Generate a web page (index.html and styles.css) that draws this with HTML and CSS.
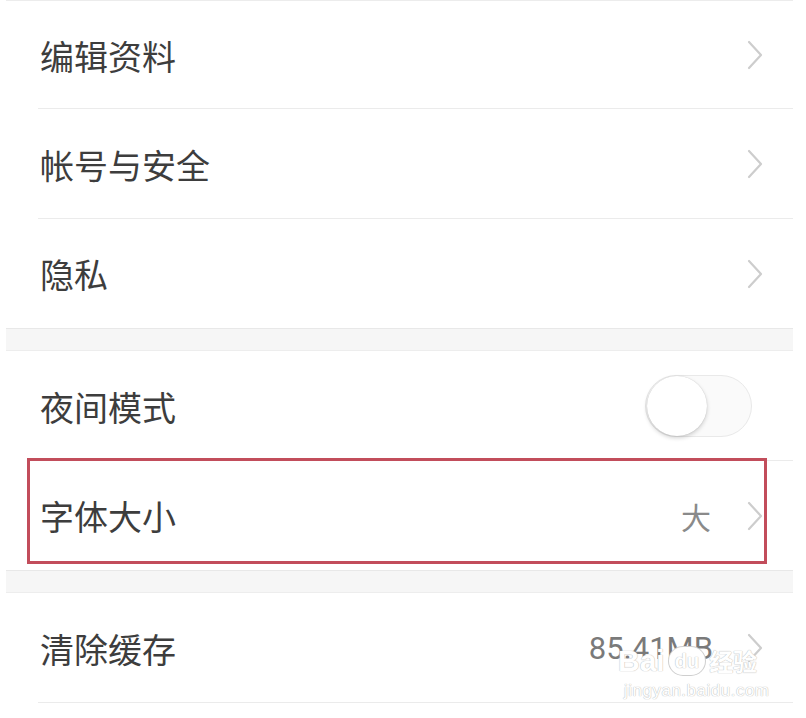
FILE: index.html
```html
<!DOCTYPE html>
<html lang="zh-CN">
<head>
<meta charset="utf-8">
<link rel="stylesheet" href="styles.css">
</head>
<body>
<div class="page">
  <div class="section first">
    <div class="row sep">
      <span class="label">编辑资料</span>
      <svg class="chev" viewBox="0 0 16 30" width="16" height="30"><polyline points="2,2 14,15 2,28"/></svg>
    </div>
    <div class="row sep">
      <span class="label">帐号与安全</span>
      <svg class="chev" viewBox="0 0 16 30" width="16" height="30"><polyline points="2,2 14,15 2,28"/></svg>
    </div>
    <div class="row">
      <span class="label">隐私</span>
      <svg class="chev" viewBox="0 0 16 30" width="16" height="30"><polyline points="2,2 14,15 2,28"/></svg>
    </div>
  </div>
  <div class="gap"></div>
  <div class="section">
    <div class="row sep">
      <span class="label">夜间模式</span>
      <div class="toggle"><div class="knob"></div></div>
    </div>
    <div class="row highlight">
      <span class="label">字体大小</span>
      <span class="value">大</span>
      <svg class="chev" viewBox="0 0 16 30" width="16" height="30"><polyline points="2,2 14,15 2,28"/></svg>
      <div class="mark"></div>
    </div>
  </div>
  <div class="gap"></div>
  <div class="section">
    <div class="row sep">
      <span class="label">清除缓存</span>
      <span class="value num">85.41MB</span>
      <svg class="chev" viewBox="0 0 16 30" width="16" height="30"><polyline points="2,2 14,15 2,28"/></svg>
    </div>
  </div>
  <div class="watermark">
    <div class="wm-top"><span class="wm-bai">Bai</span><span class="wm-du">du</span><span class="wm-jy">经验</span></div>
    <div class="wm-url">jingyan.baidu.com</div>
  </div>
</div>
</body>
</html>
```
FILE: styles.css
```css
html, body {
  margin: 0;
  padding: 0;
  background: #fff;
}
body {
  width: 806px;
  height: 718px;
  overflow: hidden;
  font-family: "Noto Sans CJK SC", "Noto Sans", sans-serif;
}
.page {
  position: relative;
  margin-left: 6px;
  width: 787px;
  border-top: 1px solid #ececec;
}
.section {
  background: #fff;
}
.row {
  position: relative;
  display: flex;
  align-items: center;
  height: 109px;
  padding-left: 34px;
  padding-right: 30px;
  box-sizing: border-box;
}
.row.sep {
  height: 110px;
}
.section.first .row.sep:first-child {
  height: 108px;
}
.row.sep::after {
  content: "";
  position: absolute;
  left: 32px;
  right: 0;
  bottom: 0;
  height: 1px;
  background: #ebebeb;
}
.label {
  flex: 1;
  font-size: 34px;
  color: #3d3d3d;
  margin-top: 0;
}
.value {
  font-size: 30px;
  color: #8a8a8a;
  margin-right: 36px;
}
.value.num {
  font-family: "Roboto", "Noto Sans", sans-serif;
  font-size: 31px;
  color: #7a7a7a;
  margin-right: 34px;
}
.chev {
  display: block;
}
.chev polyline {
  fill: none;
  stroke: #cdcdcd;
  stroke-width: 2.2;
  stroke-linecap: round;
  stroke-linejoin: round;
}
.gap {
  height: 21px;
  background: #f6f6f6;
  border-top: 1px solid #e8e8e8;
  border-bottom: 1px solid #ededed;
}
.toggle {
  position: relative;
  width: 107px;
  height: 62px;
  margin-right: 11px;
  border-radius: 31px;
  background: #fafafa;
  border: 1px solid #e9e9e9;
  box-sizing: border-box;
}
.knob {
  position: absolute;
  left: 1px;
  top: 0;
  width: 60px;
  height: 60px;
  border-radius: 50%;
  background: #fff;
  box-shadow: 0 2px 4px rgba(0,0,0,0.18), 0 0 1px rgba(0,0,0,0.2);
}
.mark {
  position: absolute;
  left: 21px;
  top: -3px;
  width: 740px;
  height: 106px;
  border: 3px solid #c24d5b;
  box-sizing: border-box;
}
.watermark {
  position: absolute;
  left: 612px;
  top: 645px;
  color: #fff;
  text-shadow: 0 0 1px #bdbdbd, 0 0 1px #bdbdbd;
  font-family: "Liberation Sans", sans-serif;
  line-height: 1;
}
.wm-top {
  display: flex;
  align-items: center;
  gap: 4px;
}
.wm-bai {
  font-size: 30px;
  font-weight: bold;
}
.wm-du {
  font-size: 20px;
  font-weight: bold;
  padding: 4px 6px;
  border-radius: 14px;
  background: #fff;
  box-shadow: 0 0 0 1px #cfcfcf;
  color: #fff;
}
.wm-jy {
  font-family: "Noto Sans CJK SC", sans-serif;
  font-size: 24px;
  font-weight: bold;
}
.wm-url {
  font-size: 17px;
  margin-top: 6px;
  margin-left: 6px;
  letter-spacing: 0.5px;
}
```
